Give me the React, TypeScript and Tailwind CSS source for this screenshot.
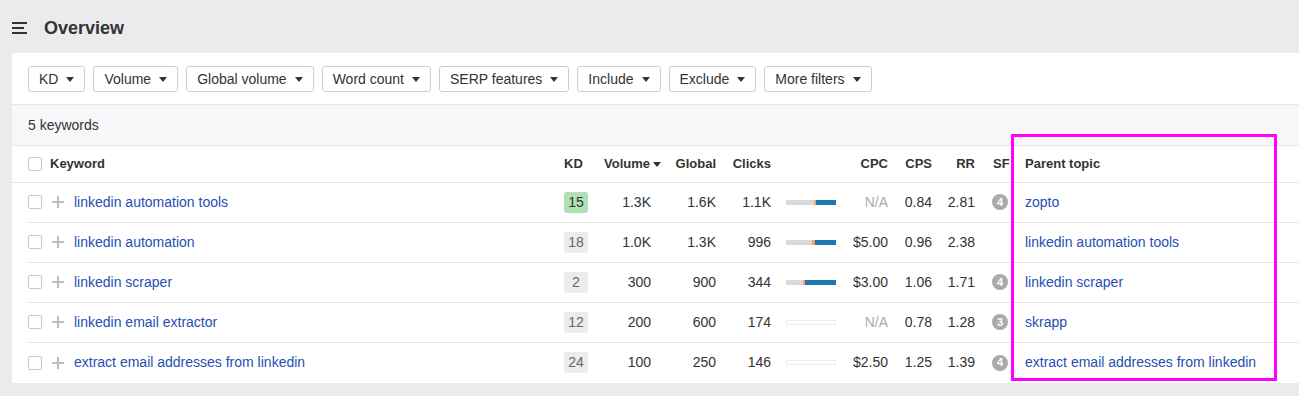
import React from "react";

const filters = ["KD", "Volume", "Global volume", "Word count", "SERP features", "Include", "Exclude", "More filters"];

type Row = {
  keyword: string;
  kd: number;
  volume: string;
  global: string;
  clicks: string;
  bar: [number, number] | null;
  cpc: string;
  cps: string;
  rr: string;
  sf: number | null;
  parent: string;
};

const rows: Row[] = [
  { keyword: "linkedin automation tools", kd: 15, volume: "1.3K", global: "1.6K", clicks: "1.1K", bar: [28, 2], cpc: "N/A", cps: "0.84", rr: "2.81", sf: 4, parent: "zopto" },
  { keyword: "linkedin automation", kd: 18, volume: "1.0K", global: "1.3K", clicks: "996", bar: [26, 3], cpc: "$5.00", cps: "0.96", rr: "2.38", sf: null, parent: "linkedin automation tools" },
  { keyword: "linkedin scraper", kd: 2, volume: "300", global: "900", clicks: "344", bar: [17, 2], cpc: "$3.00", cps: "1.06", rr: "1.71", sf: 4, parent: "linkedin scraper" },
  { keyword: "linkedin email extractor", kd: 12, volume: "200", global: "600", clicks: "174", bar: null, cpc: "N/A", cps: "0.78", rr: "1.28", sf: 3, parent: "skrapp" },
  { keyword: "extract email addresses from linkedin", kd: 24, volume: "100", global: "250", clicks: "146", bar: null, cpc: "$2.50", cps: "1.25", rr: "1.39", sf: 4, parent: "extract email addresses from linkedin" },
];

const cols = "grid grid-cols-[528px_40px_65px_55px_55px_75px_42px_44px_43px_40px_1fr]";

const Caret = () => (
  <svg width="8" height="5" viewBox="0 0 8 5" className="fill-[#333]">
    <path d="M0 0h8L4 5z" />
  </svg>
);

const Checkbox = () => <span className="block h-[14px] w-[14px] rounded-[2px] border border-[#c8c8c8] bg-white" />;

const Plus = () => (
  <svg width="12" height="12" viewBox="0 0 12 12" className="ml-[10px] fill-[#bdbdbd]">
    <rect x="5" y="0" width="2" height="12" />
    <rect x="0" y="5" width="12" height="2" />
  </svg>
);

const IntentBar = ({ bar }: { bar: [number, number] | null }) => {
  if (!bar) return <div className="h-[5px] w-[50px] border border-[#ececec]" />;
  return (
    <div className="flex h-[5px] w-[50px]">
      <div className="bg-[#d9d9d9]" style={{ width: bar[0] }} />
      <div className="bg-[#f6a85c]" style={{ width: bar[1] }} />
      <div className="flex-1 bg-[#1f77b4]" />
    </div>
  );
};

export default function App() {
  return (
    <div className="min-h-[396px] bg-[#ebebed] pb-[13px] font-['Liberation_Sans',Arial,sans-serif] text-[14px] text-[#333]">
      <div className="flex h-[53px] items-center pl-[12px] pt-[3px]">
        <svg width="16" height="12" viewBox="0 0 16 12" className="fill-[#333]">
          <rect x="0" y="0" width="15" height="2" />
          <rect x="0" y="5" width="12" height="2" />
          <rect x="0" y="10" width="15" height="2" />
        </svg>
        <h1 className="ml-[16px] text-[18px] font-bold text-[#333]">Overview</h1>
      </div>

      <div className="relative ml-[12px] bg-white">
        <div className="flex gap-[8px] border-b border-[#e6e6e8] px-[16px] pb-[12px] pt-[13px]">
          {filters.map((f) => (
            <button
              key={f}
              className="flex h-[26px] items-center gap-[8px] rounded-[3px] border border-[#cfcfcf] bg-white pl-[10px] pr-[10px] text-[14px] text-[#333]"
            >
              {f}
              <Caret />
            </button>
          ))}
        </div>

        <div className="flex h-[41px] items-center border-b border-[#e6e6e8] bg-[#f8f8fa] px-[16px]">5 keywords</div>

        <div className={`${cols} h-[37px] items-center border-b border-[#e6e6e8] pl-[16px] text-[13px] font-bold`}>
          <div className="flex items-center gap-[8px]">
            <Checkbox />
            Keyword
          </div>
          <div className="pl-[8px]">KD</div>
          <div className="flex items-center justify-end gap-[3px]">
            Volume
            <Caret />
          </div>
          <div className="text-right">Global</div>
          <div className="text-right">Clicks</div>
          <div />
          <div className="text-right">CPC</div>
          <div className="text-right">CPS</div>
          <div className="text-right">RR</div>
          <div className="pl-[18px]">SF</div>
          <div className="pl-[10px]">Parent topic</div>
        </div>

        <div className="pl-[16px]">
          {rows.map((r, i) => (
            <div key={r.keyword} className={`${cols} h-[40px] items-center pb-[1px] ${i < rows.length - 1 ? "border-b border-[#e6e6e8]" : ""}`}>
              <div className="flex items-center">
                <Checkbox />
                <Plus />
                <a className="ml-[10px] text-[#1f4fb4]">{r.keyword}</a>
              </div>
              <div className="pl-[8px]">
                <span
                  className={`flex h-[21px] w-[24px] items-center justify-center rounded-[3px] text-[14px] ${
                    r.kd === 15 ? "bg-[#b2dfb4] text-[#333]" : "bg-[#ececee] text-[#666]"
                  }`}
                >
                  {r.kd}
                </span>
              </div>
              <div className="pr-[10px] text-right">{r.volume}</div>
              <div className="text-right">{r.global}</div>
              <div className="text-right">{r.clicks}</div>
              <div className="pl-[15px]">
                <IntentBar bar={r.bar} />
              </div>
              <div className={`text-right ${r.cpc === "N/A" ? "text-[#aaa]" : ""}`}>{r.cpc}</div>
              <div className="text-right">{r.cps}</div>
              <div className="text-right">{r.rr}</div>
              <div className="pl-[17px]">
                {r.sf !== null && (
                  <span className="flex h-[16px] w-[16px] items-center justify-center rounded-full bg-[#aaa] text-[11px] font-bold text-white">
                    {r.sf}
                  </span>
                )}
              </div>
              <div className="pl-[10px]">
                <a className="text-[#1f4fb4]">{r.parent}</a>
              </div>
            </div>
          ))}
        </div>

        <div className="pointer-events-none absolute left-[999px] top-[81px] h-[247px] w-[266px] border-[3px] border-[#ff00ff]" />
      </div>
    </div>
  );
}
